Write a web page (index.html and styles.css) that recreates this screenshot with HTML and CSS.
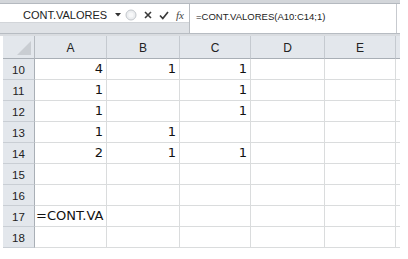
FILE: index.html
```html
<!DOCTYPE html>
<html lang="pt">
  <head>
    <meta charset="UTF-8" />
    <meta name="viewport" content="width=device-width, initial-scale=1.0" />
    <title>CONT.VALORES</title>
    <link rel="stylesheet" href="styles.css">
  </head>

  <body>
    <div class="excel">
      <div class="top-band"></div>

      <!-- formula bar -->
      <div class="formula-bar">
        <div class="fb-left">
          <div class="fb-row">
            <div class="name-box">
              <span class="name">CONT.VALORES</span>
              <svg class="drop" width="6" height="4" viewBox="0 0 6 4"><path d="M0 0h6L3 3.5z" fill="#333"/></svg>
            </div>
            <div class="handle">
              <svg width="12" height="14" viewBox="0 0 12 14"><circle cx="6" cy="7" r="5" fill="#eceef0" stroke="#c3c7cc"/><circle cx="6" cy="7" r="2.5" fill="#f7f8f9"/></svg>
            </div>
            <div class="btn btn-x">
              <svg width="8" height="8" viewBox="0 0 8 8"><path d="M1 1l6 6M7 1L1 7" stroke="#3a3a3a" stroke-width="1.6"/></svg>
            </div>
            <div class="btn btn-ok">
              <svg width="10" height="9" viewBox="0 0 10 9"><path d="M1 4.5l2.8 3L9 1" fill="none" stroke="#3a3a3a" stroke-width="1.7"/></svg>
            </div>
            <div class="btn btn-fx"><span class="fx">fx</span></div>
          </div>
          <div class="fb-gap"></div>
        </div>
        <div class="fb-input">=CONT.VALORES(A10:C14;1)</div>
      </div>

      <div class="header-gap"></div>

      <!-- sheet -->
      <div class="sheet">
        <div class="corner"><svg width="14" height="14" viewBox="0 0 14 14"><path d="M14 0v14H0z" fill="#c9cdd2"/></svg></div>
        <div class="col-head">A</div>
        <div class="col-head">B</div>
        <div class="col-head">C</div>
        <div class="col-head">D</div>
        <div class="col-head">E</div>
        <div class="col-head tail"></div>

        <div class="row-head">10</div>
        <div class="cell num">4</div><div class="cell num">1</div><div class="cell num">1</div><div class="cell"></div><div class="cell"></div><div class="cell tail"></div>

        <div class="row-head">11</div>
        <div class="cell num">1</div><div class="cell"></div><div class="cell num">1</div><div class="cell"></div><div class="cell"></div><div class="cell tail"></div>

        <div class="row-head">12</div>
        <div class="cell num">1</div><div class="cell"></div><div class="cell num">1</div><div class="cell"></div><div class="cell"></div><div class="cell tail"></div>

        <div class="row-head">13</div>
        <div class="cell num">1</div><div class="cell num">1</div><div class="cell"></div><div class="cell"></div><div class="cell"></div><div class="cell tail"></div>

        <div class="row-head">14</div>
        <div class="cell num">2</div><div class="cell num">1</div><div class="cell num">1</div><div class="cell"></div><div class="cell"></div><div class="cell tail"></div>

        <div class="row-head">15</div>
        <div class="cell"></div><div class="cell"></div><div class="cell"></div><div class="cell"></div><div class="cell"></div><div class="cell tail"></div>

        <div class="row-head">16</div>
        <div class="cell"></div><div class="cell"></div><div class="cell"></div><div class="cell"></div><div class="cell"></div><div class="cell tail"></div>

        <div class="row-head">17</div>
        <div class="cell text">=CONT.VA</div><div class="cell"></div><div class="cell"></div><div class="cell"></div><div class="cell"></div><div class="cell tail"></div>

        <div class="row-head">18</div>
        <div class="cell"></div><div class="cell"></div><div class="cell"></div><div class="cell"></div><div class="cell"></div><div class="cell tail"></div>
      </div>
    </div>
  </body>
</html>
```

FILE: styles.css
```css
body {
  margin: 0;
  background: #fff;
  font-family: "Liberation Sans", Arial, sans-serif;
}

.excel {
  width: 400px;
  height: 259px;
  overflow: hidden;
}

.top-band {
  height: 3px;
  background: #d3d6da;
  border-bottom: 1px solid #b4b9bf;
}

/* formula bar */
.formula-bar {
  display: flex;
  height: 29px;
}

.fb-left {
  width: 189px;
  display: flex;
  flex-direction: column;
  border-right: 1px solid #b9bdc2;
}

.fb-row {
  display: flex;
  height: 18px;
  background: #fff;
  border-bottom: 1px solid #d2d5d9;
}

.fb-gap {
  flex: 1;
  background: #dfe2e6;
}

.name-box {
  width: 125px;
  display: flex;
  align-items: center;
  font-size: 11px;
  color: #222;
}

.name {
  padding-left: 23px;
  padding-top: 4px;
}

.drop {
  margin-left: auto;
  margin-right: 4px;
  margin-top: 4px;
}

.handle {
  width: 15px;
  display: flex;
  align-items: center;
  padding-top: 4px;
}

.btn {
  display: flex;
  align-items: center;
  justify-content: center;
  padding-top: 4px;
}

.btn-x {
  width: 16px;
}

.btn-ok {
  width: 15px;
}

.btn-fx {
  width: 18px;
}

.fx {
  font-family: "Liberation Serif", serif;
  font-style: italic;
  font-size: 11px;
  color: #444;
}

.fb-input {
  flex: 1;
  font-size: 9.5px;
  color: #222;
  padding: 6px 0 0 6px;
  line-height: 14px;
  border-right: 1px solid #c7cacf;
  margin-right: 3px;
}

.header-gap {
  height: 2px;
  background: #d9dce0;
  border-top: 1px solid #b7bcc2;
}

/* sheet grid */
.sheet {
  display: grid;
  grid-template-columns: 35px 72px 73px 71px 74px 71px 4px;
  grid-template-rows: 23px repeat(9, 21px);
}

.sheet > div {
  box-sizing: border-box;
}

.corner,
.col-head,
.row-head {
  background: #e3e7ec;
  color: #222;
  font-size: 12px;
}

.corner {
  display: flex;
  align-items: flex-end;
  justify-content: flex-end;
  padding: 0 3px 3px 0;
  margin-left: 3px;
  border-right: 1px solid #b5bac0;
  border-bottom: 1px solid #a9afb6;
}

.col-head {
  display: flex;
  align-items: center;
  justify-content: center;
  border-right: 1px solid #c5cad0;
  border-bottom: 1px solid #a9afb6;
  padding-top: 1px;
}

.col-head.tail {
  border-right: none;
}

.row-head {
  display: flex;
  align-items: center;
  justify-content: center;
  margin-left: 3px;
  border-right: 1px solid #a9afb6;
  border-bottom: 1px solid #c9ced4;
  font-size: 11.5px;
  padding-top: 1px;
}

.cell {
  border-right: 1px solid #dadcdd;
  border-bottom: 1px solid #dadcdd;
  font-family: "DejaVu Sans", sans-serif;
  font-size: 13px;
  color: #111;
  display: flex;
  align-items: flex-end;
  padding: 0 3px 3px 2px;
  line-height: 14px;
  overflow: hidden;
  white-space: nowrap;
}

.cell.num {
  justify-content: flex-end;
}

.cell.text {
  padding-left: 1px;
}

.cell.tail {
  border-right: none;
}
```
